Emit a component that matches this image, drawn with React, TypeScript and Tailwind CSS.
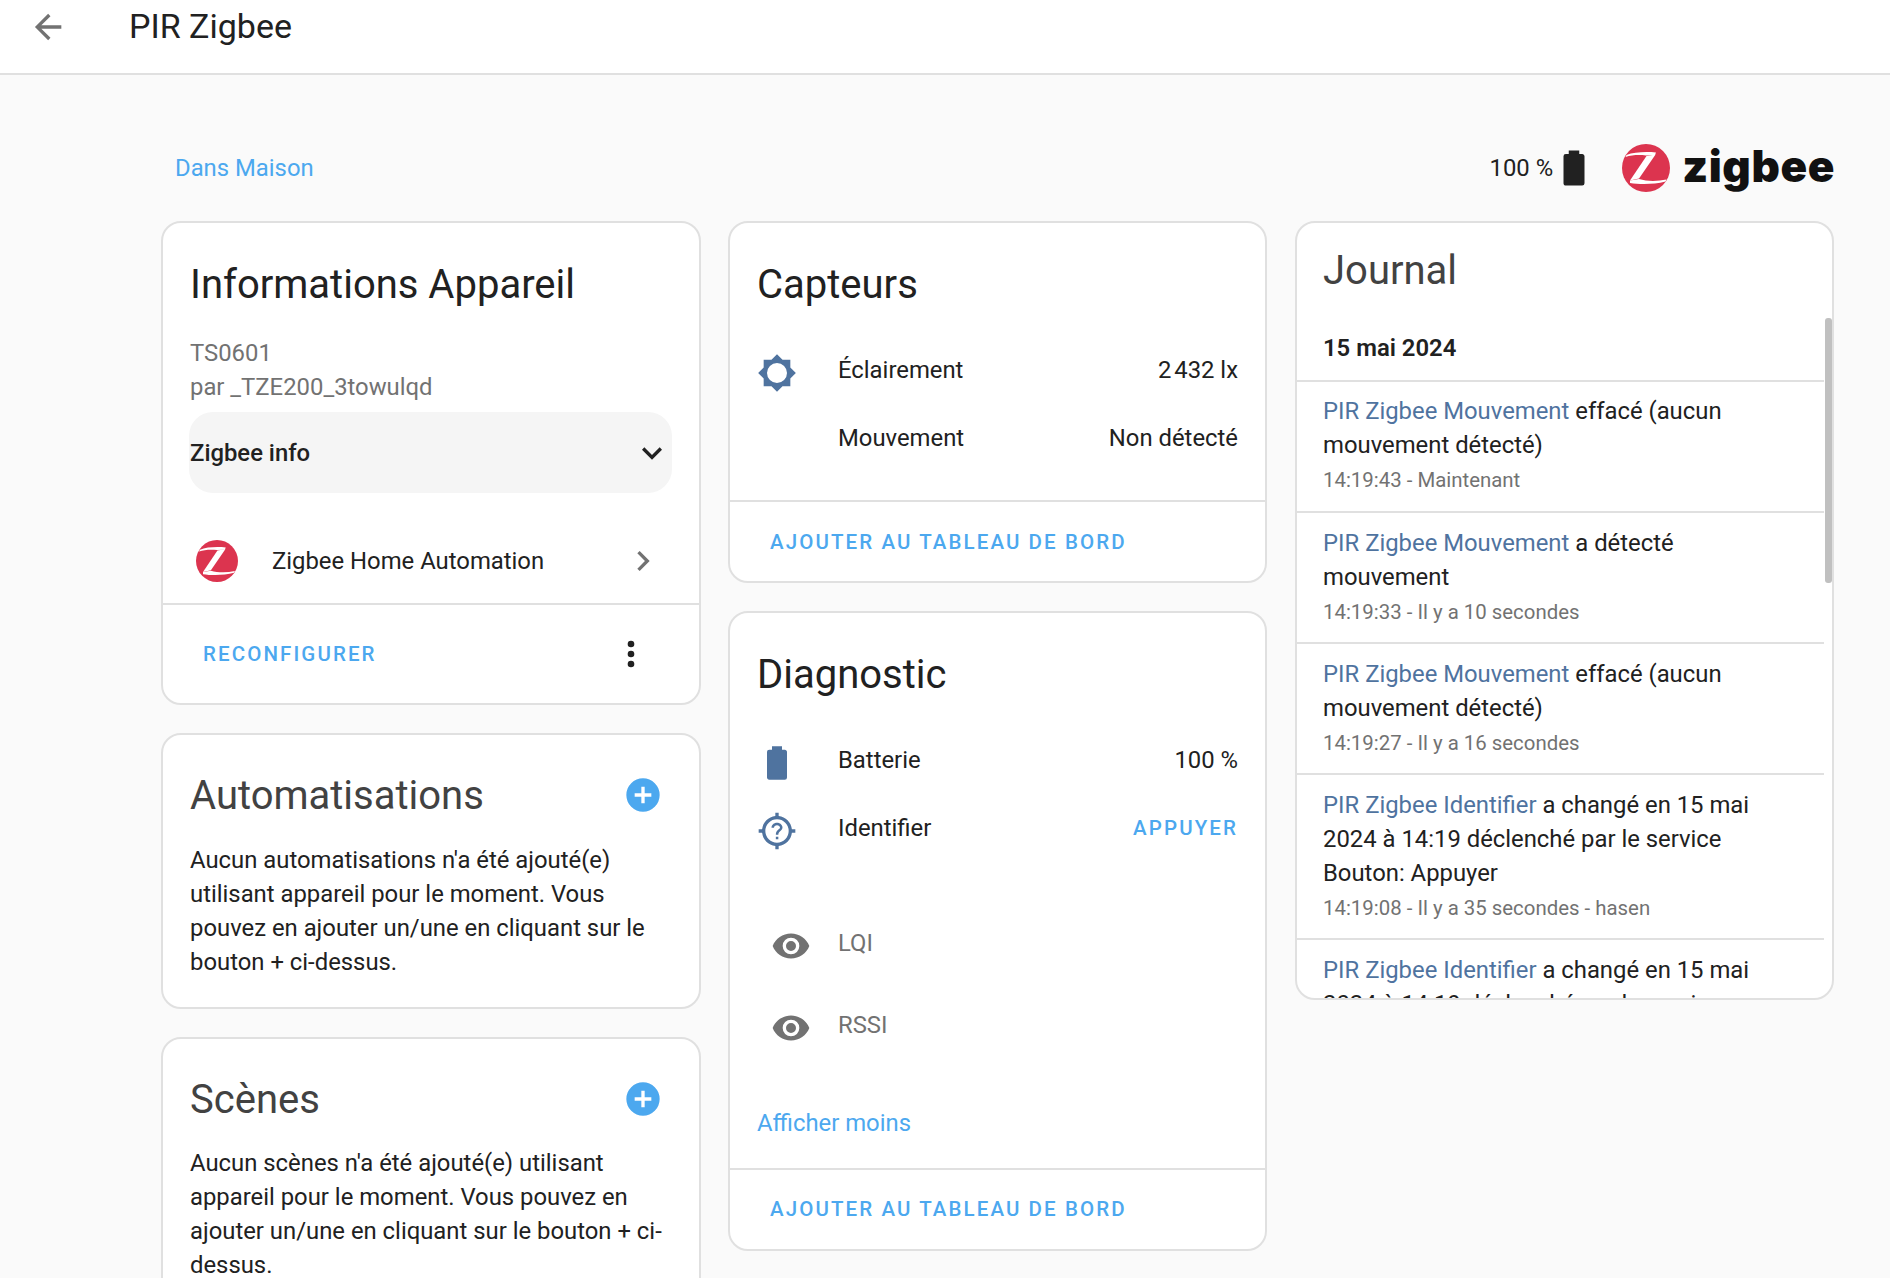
import { ReactNode } from "react";

const MDI = {
  back: "M20,11V13H8L13.5,18.5L12.08,19.92L4.16,12L12.08,4.08L13.5,5.5L8,11H20Z",
  battery: "M16.67,4H15V2H9V4H7.33A1.33,1.33 0 0,0 6,5.33V20.67C6,21.4 6.6,22 7.33,22H16.67A1.33,1.33 0 0,0 18,20.67V5.33C18,4.6 17.4,4 16.67,4Z",
  sun: "M20,8.69V4H15.31L12,0.69L8.69,4H4V8.69L0.69,12L4,15.31V20H8.69L12,23.31L15.31,20H20V15.31L23.31,12L20,8.69M12,18A6,6 0 0,1 6,12A6,6 0 0,1 12,6A6,6 0 0,1 18,12A6,6 0 0,1 12,18Z",
  eye: "M12,9A3,3 0 0,0 9,12A3,3 0 0,0 12,15A3,3 0 0,0 15,12A3,3 0 0,0 12,9M12,17A5,5 0 0,1 7,12A5,5 0 0,1 12,7A5,5 0 0,1 17,12A5,5 0 0,1 12,17M12,4.5C7,4.5 2.73,7.61 1,12C2.73,16.39 7,19.5 12,19.5C17,19.5 21.27,16.39 23,12C21.27,7.61 17,4.5 12,4.5Z",
  plus: "M17,13H13V17H11V13H7V11H11V7H13V11H17M12,2A10,10 0 0,0 2,12A10,10 0 0,0 12,22A10,10 0 0,0 22,12A10,10 0 0,0 12,2Z",
  dots: "M12,16A2,2 0 0,1 14,18A2,2 0 0,1 12,20A2,2 0 0,1 10,18A2,2 0 0,1 12,16M12,10A2,2 0 0,1 14,12A2,2 0 0,1 12,14A2,2 0 0,1 10,12A2,2 0 0,1 12,10M12,4A2,2 0 0,1 14,6A2,2 0 0,1 12,8A2,2 0 0,1 10,6A2,2 0 0,1 12,4Z",
  chevDown: "M7.41,8.58L12,13.17L16.59,8.58L18,10L12,16L6,10L7.41,8.58Z",
  chevRight: "M8.59,16.58L13.17,12L8.59,7.41L10,6L16,12L10,18L8.59,16.58Z",
  crossQ: "M11,1H13V3.06C17.17,3.52 20.48,6.83 20.94,11H23V13H20.94C20.48,17.17 17.17,20.48 13,20.94V23H11V20.94C6.83,20.48 3.52,17.17 3.06,13H1V11H3.06C3.52,6.83 6.83,3.52 11,3.06V1M12,5A7,7 0 0,0 5,12A7,7 0 0,0 12,19A7,7 0 0,0 19,12A7,7 0 0,0 12,5M11.3,15.5H12.8V17H11.3V15.5M12,7C13.93,7 15.3,8.3 15.3,9.9C15.3,11.9 12.8,12.1 12.8,14.2H11.3C11.3,11.3 13.8,11.1 13.8,9.9C13.8,9.1 13,8.5 12,8.5C11,8.5 10.2,9.1 10.2,10H8.7C8.7,8.3 10.1,7 12,7Z",
};

function Icon({ d, className }: { d: string; className: string }) {
  return (
    <svg viewBox="0 0 24 24" className={className} fill="currentColor">
      <path d={d} />
    </svg>
  );
}

function ZigbeeMark({ className }: { className: string }) {
  return (
    <svg viewBox="0 0 48 48" className={className}>
      <circle cx="24" cy="24" r="24" fill="#dc344f" />
      <path d="M4.5 11C12 8 24 7.5 34 8.5L33 11L24 11.5C17 10.5 10 11 3.5 13Z" fill="#fff" />
      <path d="M24.5 12L33.5 10.5L17 34.5L8 36.5Z" fill="#fff" />
      <path d="M8 39C18 40.5 32 40.5 43.5 37.5L44.5 35.5C35 37.5 25 37.5 17 35L8 36.5Z" fill="#fff" />
    </svg>
  );
}

function Card({ children, className = "" }: { children: ReactNode; className?: string }) {
  return <section className={`overflow-hidden rounded-[20px] border-2 border-[#e0e0e0] bg-white ${className}`}>{children}</section>;
}

function CardTitle({ children }: { children: ReactNode }) {
  return <h2 className="text-[40px] leading-[48px] font-normal text-[#212121]">{children}</h2>;
}

function LinkButton({ children }: { children: ReactNode }) {
  return <span className="text-[20.5px] font-medium tracking-[2.1px] text-[#4ca8ef]">{children}</span>;
}

function CardAction({ children, h }: { children: ReactNode; h: string }) {
  return <div className={`flex items-center border-t-2 border-[#e0e0e0] pl-[40px] ${h}`}>{children}</div>;
}

function Row({ d, color, label, value, h = "h-[68px]", muted, eye }: { d?: string; color?: string; label: string; value?: ReactNode; h?: string; muted?: boolean; eye?: boolean }) {
  return (
    <div className={`flex items-center pr-[27px] pl-[27px] ${h}`}>
      <div className="flex w-[81px] shrink-0 items-center">
        {d && <Icon d={d} className={`h-10 w-10 ${eye ? "mt-[6px] ml-[14px]" : "mt-[6px]"} ${color ?? ""}`} />}
      </div>
      <span className={`flex-1 ${muted ? "text-[#727272]" : ""}`}>{label}</span>
      {value}
    </div>
  );
}

function Entry({ name, text, time, first, last }: { name: string; text: string; time: string; first?: boolean; last?: boolean }) {
  return (
    <div className={`pr-[56px] pl-[26px] ${first ? "pt-[12px] pb-[16px]" : "pt-[13px] pb-[15px]"} ${last ? "" : "border-b-2 border-[#e0e0e0]"}`}>
      <p>
        <span className="text-[#4f739f]">{name}</span> {text}
      </p>
      <p className="mt-[3px] text-[20.4px] leading-[30px] text-[#727272]">{time}</p>
    </div>
  );
}

export default function App() {
  return (
    <div className="h-[1278px] overflow-hidden bg-[#fafafa] font-['Roboto',sans-serif] text-[23.85px] leading-[34px] text-[#212121]">
      <header className="flex h-[75px] items-start border-b-2 border-[#e0e0e0] bg-white">
        <Icon d={MDI.back} className="mt-[7px] ml-[28px] h-10 w-10 text-[#727272]" />
        <h1 className="mt-[6px] ml-[61px] text-[34px] leading-[40px] font-normal">PIR Zigbee</h1>
      </header>

      <main className="pt-[67px] pr-[56px] pl-[161px]">
        <div className="flex h-[52px] items-center">
          <a className="ml-[14px] flex-1 text-[#4ca8ef]">Dans Maison</a>
          <span>100 %</span>
          <Icon d={MDI.battery} className="h-[42px] w-[42px] text-[#212121]" />
          <ZigbeeMark className="ml-[27px] h-[48px] w-[48px]" />
          <span className="mt-[-4px] mr-[-1px] ml-[12px] font-['Inter',sans-serif] text-[44px] leading-[52px] font-black tracking-[0.6px] text-[#111]">zigbee</span>
        </div>

        <div className="mt-[27px] grid grid-cols-[540px_539px_540px] items-start gap-x-[27px]">
          <div className="flex flex-col gap-[28px]">
            <Card>
              <div className="pt-[38px] pl-[27px]">
                <CardTitle>Informations Appareil</CardTitle>
                <p className="mt-[27px] text-[#727272]">TS0601</p>
                <p className="text-[#727272]">par _TZE200_3towulqd</p>
              </div>
              <div className="mt-[8px] mr-[27px] ml-[26px] flex h-[81px] items-center justify-between rounded-[24px] bg-[#f5f5f5] pl-[1px] font-medium">
                Zigbee info
                <Icon d={MDI.chevDown} className="h-10 w-10" />
              </div>
              <div className="mt-[25px] flex h-[85px] items-center pr-[36px] pl-[33px]">
                <ZigbeeMark className="h-[42px] w-[42px]" />
                <span className="ml-[34px] flex-1">Zigbee Home Automation</span>
                <Icon d={MDI.chevRight} className="h-10 w-10 text-[#727272]" />
              </div>
              <div className="flex h-[100px] items-center justify-between border-t-2 border-[#e0e0e0] pr-[48px] pl-[40px]">
                <LinkButton>RECONFIGURER</LinkButton>
                <Icon d={MDI.dots} className="h-10 w-10" />
              </div>
            </Card>

            <Card>
              <div className="pt-[37px] pr-[28px] pb-[28px] pl-[27px]">
                <div className="flex items-center justify-between pr-[8px]">
                  <CardTitle>
                    <span className="text-[#424242]">Automatisations</span>
                  </CardTitle>
                  <Icon d={MDI.plus} className="mt-[-3px] h-10 w-10 text-[#4ca8ef]" />
                </div>
                <p className="mt-[23px]">Aucun automatisations n'a été ajouté(e) utilisant appareil pour le moment. Vous pouvez en ajouter un/une en cliquant sur le bouton + ci-dessus.</p>
              </div>
            </Card>

            <Card>
              <div className="pt-[37px] pr-[28px] pb-[28px] pl-[27px]">
                <div className="flex items-center justify-between pr-[8px]">
                  <CardTitle>
                    <span className="text-[#424242]">Scènes</span>
                  </CardTitle>
                  <Icon d={MDI.plus} className="mt-[-3px] h-10 w-10 text-[#4ca8ef]" />
                </div>
                <p className="mt-[22px]">Aucun scènes n'a été ajouté(e) utilisant appareil pour le moment. Vous pouvez en ajouter un/une en cliquant sur le bouton + ci-dessus.</p>
              </div>
            </Card>
          </div>

          <div className="flex flex-col gap-[28px]">
            <Card>
              <div className="pt-[38px] pb-[28px]">
                <div className="pl-[27px]">
                  <CardTitle>Capteurs</CardTitle>
                </div>
                <div className="mt-[27px]">
                  <Row d={MDI.sun} color="text-[#4f739f]" label="Éclairement" value={"2\u202f432 lx"} />
                  <Row label="Mouvement" value="Non détecté" />
                </div>
              </div>
              <CardAction h="h-[81px]">
                <LinkButton>AJOUTER AU TABLEAU DE BORD</LinkButton>
              </CardAction>
            </Card>

            <Card>
              <div className="pt-[38px] pb-[28px]">
                <div className="pl-[27px]">
                  <CardTitle>Diagnostic</CardTitle>
                </div>
                <div className="mt-[27px]">
                  <Row d={MDI.battery} color="text-[#4f739f]" label="Batterie" value="100 %" />
                  <Row d={MDI.crossQ} color="text-[#4f739f]" label="Identifier" value={<LinkButton>APPUYER</LinkButton>} />
                </div>
                <div className="mt-[40px]">
                  <Row d={MDI.eye} color="text-[#727272]" label="LQI" h="h-[82px]" muted eye />
                  <Row d={MDI.eye} color="text-[#727272]" label="RSSI" h="h-[82px]" muted eye />
                </div>
                <a className="mt-[40px] block pl-[27px] text-[#4ca8ef]">Afficher moins</a>
              </div>
              <CardAction h="h-[81px] pb-[2px]">
                <LinkButton>AJOUTER AU TABLEAU DE BORD</LinkButton>
              </CardAction>
            </Card>
          </div>

          <Card className="ml-[1px]">
            <div className="relative h-[775px] overflow-hidden">
              <div className="pt-[24px] pl-[26px]">
                <CardTitle>
                  <span className="text-[#424242]">Journal</span>
                </CardTitle>
              </div>
              <div className="mr-[8px]">
                <p className="mt-[36px] border-b-2 border-[#e0e0e0] pb-[15px] pl-[26px] font-semibold">15 mai 2024</p>
                <Entry first name="PIR Zigbee Mouvement" text="effacé (aucun mouvement détecté)" time="14:19:43 - Maintenant" />
                <Entry name="PIR Zigbee Mouvement" text="a détecté mouvement" time="14:19:33 - Il y a 10 secondes" />
                <Entry name="PIR Zigbee Mouvement" text="effacé (aucun mouvement détecté)" time="14:19:27 - Il y a 16 secondes" />
                <Entry name="PIR Zigbee Identifier" text="a changé en 15 mai 2024 à 14:19 déclenché par le service Bouton: Appuyer" time="14:19:08 - Il y a 35 secondes - hasen" />
                <Entry name="PIR Zigbee Identifier" text="a changé en 15 mai 2024 à 14:19 déclenché par le service Bouton: Appuyer" time="14:19:06" last />
              </div>
              <div className="absolute top-[95px] right-0 h-[265px] w-[7px] rounded-[3px] bg-[#c0c0c0]" />
            </div>
          </Card>
        </div>
      </main>
    </div>
  );
}
